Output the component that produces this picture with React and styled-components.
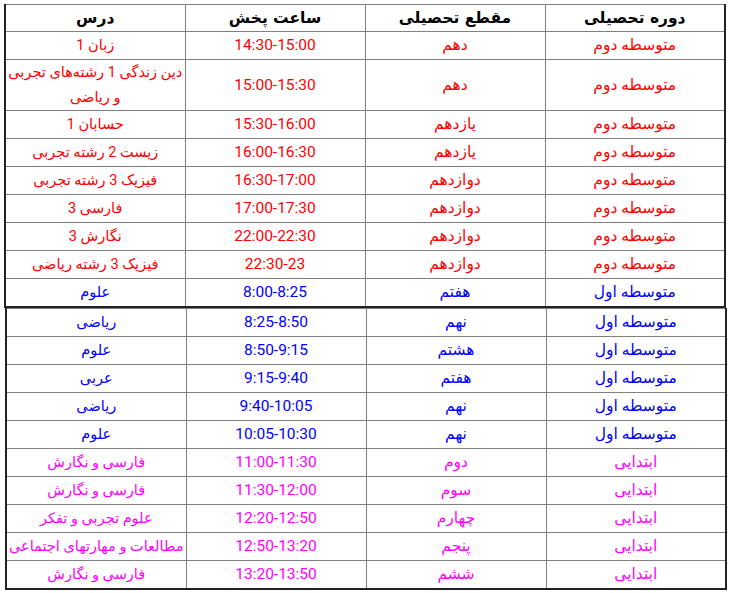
import React from 'react';
import styled, { createGlobalStyle } from 'styled-components';

const GlobalStyle = createGlobalStyle`
  body {
    margin: 0;
    background: #ffffff;
  }
`;

const colors = {
  red: '#ff0000',
  blue: '#0000ff',
  pink: '#ff00ff',
};

const headers = ['دوره تحصیلی', 'مقطع تحصیلی', 'ساعت پخش', 'درس'];

const topRows = [
  ['متوسطه دوم', 'دهم', '14:30-15:00', 'زبان 1', 'red'],
  ['متوسطه دوم', 'دهم', '15:00-15:30', 'دین زندگی 1 رشته‌های تجربی و ریاضی', 'red'],
  ['متوسطه دوم', 'یازدهم', '15:30-16:00', 'حسابان 1', 'red'],
  ['متوسطه دوم', 'یازدهم', '16:00-16:30', 'زیست 2 رشته تجربی', 'red'],
  ['متوسطه دوم', 'دوازدهم', '16:30-17:00', 'فیزیک 3 رشته تجربی', 'red'],
  ['متوسطه دوم', 'دوازدهم', '17:00-17:30', 'فارسی 3', 'red'],
  ['متوسطه دوم', 'دوازدهم', '22:00-22:30', 'نگارش 3', 'red'],
  ['متوسطه دوم', 'دوازدهم', '22:30-23', 'فیزیک 3 رشته ریاضی', 'red'],
  ['متوسطه اول', 'هفتم', '8:00-8:25', 'علوم', 'blue'],
];

const bottomRows = [
  ['متوسطه اول', 'نهم', '8:25-8:50', 'ریاضی', 'blue'],
  ['متوسطه اول', 'هشتم', '8:50-9:15', 'علوم', 'blue'],
  ['متوسطه اول', 'هفتم', '9:15-9:40', 'عربی', 'blue'],
  ['متوسطه اول', 'نهم', '9:40-10:05', 'ریاضی', 'blue'],
  ['متوسطه اول', 'نهم', '10:05-10:30', 'علوم', 'blue'],
  ['ابتدایی', 'دوم', '11:00-11:30', 'فارسی و نگارش', 'pink'],
  ['ابتدایی', 'سوم', '11:30-12:00', 'فارسی و نگارش', 'pink'],
  ['ابتدایی', 'چهارم', '12:20-12:50', 'علوم تجربی و تفکر', 'pink'],
  ['ابتدایی', 'پنجم', '12:50-13:20', 'مطالعات و مهارتهای اجتماعی', 'pink'],
  ['ابتدایی', 'ششم', '13:20-13:50', 'فارسی و نگارش', 'pink'],
];

function Columns() {
  return (
    <colgroup>
      <col width="180" />
      <col width="180" />
      <col width="180" />
      <col width="180" />
    </colgroup>
  );
}

function App() {
  return (
    <Page>
      <GlobalStyle />
      <Table dir="rtl">
        <Columns />
        <thead>
          <tr>
            {headers.map((h) => (
              <HeadCell key={h}>{h}</HeadCell>
            ))}
          </tr>
        </thead>
        <tbody>
          {topRows.map((r, i) => (
            <ScheduleRow key={i} row={r} />
          ))}
        </tbody>
      </Table>
      <Table dir="rtl" $shift>
        <Columns />
        <tbody>
          {bottomRows.map((r, i) => (
            <ScheduleRow key={i} row={r} />
          ))}
        </tbody>
      </Table>
    </Page>
  );
}

function ScheduleRow({ row }) {
  const [level, grade, time, lesson, tone] = row;
  return (
    <tr>
      <Cell $tone={tone}>{level}</Cell>
      <Cell $tone={tone}>{grade}</Cell>
      <TimeCell $tone={tone}>{time}</TimeCell>
      <LessonCell $tone={tone}>{lesson}</LessonCell>
    </tr>
  );
}

export default App;

const Page = styled.div`
  padding: 4px 0 0 4px;
  width: 726px;
  display: flex;
  flex-direction: column;
  align-items: flex-start;
  font-family: 'DejaVu Sans', sans-serif;
`;

const Table = styled.table`
  border-collapse: collapse;
  table-layout: fixed;
  width: 722px;
  margin-left: ${({ $shift }) => ($shift ? '1px' : '0')};
  border: 2px solid #222222;
  border-top-width: 1px;
`;

const HeadCell = styled.th`
  border: 1px solid #808080;
  height: 26px;
  padding: 0 1px;
  font-family: 'DejaVu Sans', sans-serif;
  font-size: 15.5px;
  font-weight: 700;
  color: #000000;
  text-align: center;
  vertical-align: middle;
`;

const Cell = styled.td`
  border: 1px solid #808080;
  height: 27px;
  padding: 0 1px;
  line-height: 25px;
  font-family: 'Roboto', 'DejaVu Sans', sans-serif;
  font-size: 15.5px;
  color: ${({ $tone }) => colors[$tone]};
  text-align: center;
  vertical-align: middle;
`;

const LessonCell = styled(Cell)`
  font-size: 14.5px;
`;

const TimeCell = styled(Cell)`
  font-family: 'Roboto', sans-serif;
  font-size: 15.5px;
`;
